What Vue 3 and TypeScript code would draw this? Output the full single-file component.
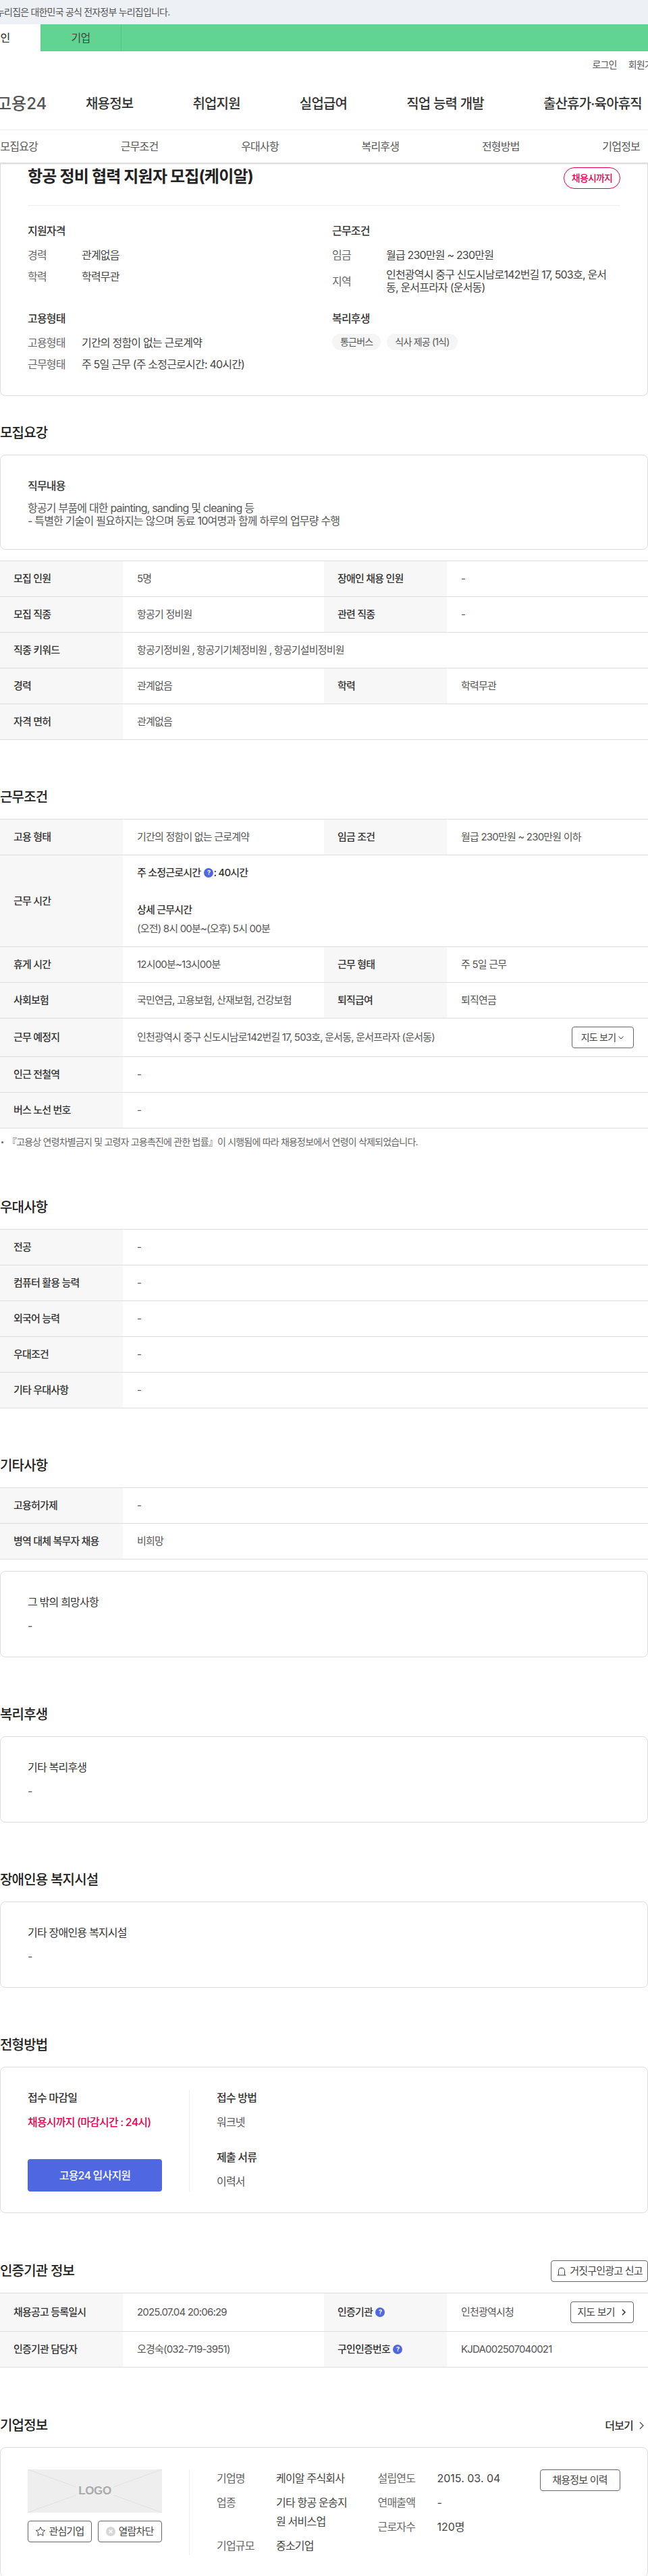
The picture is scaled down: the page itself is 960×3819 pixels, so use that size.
<script setup lang="ts">
type Row = { label: string; value: string; label2?: string; value2?: string }

const recruitRows: Row[] = [
  { label: '모집 인원', value: '5명', label2: '장애인 채용 인원', value2: '-' },
  { label: '모집 직종', value: '항공기 정비원', label2: '관련 직종', value2: '-' },
  { label: '직종 키워드', value: '항공기정비원 , 항공기기체정비원 , 항공기설비정비원' },
  { label: '경력', value: '관계없음', label2: '학력', value2: '학력무관' },
  { label: '자격 면허', value: '관계없음' },
]
const workRowsA: Row[] = [
  { label: '휴게 시간', value: '12시00분~13시00분', label2: '근무 형태', value2: '주 5일 근무' },
  { label: '사회보험', value: '국민연금, 고용보험, 산재보험, 건강보험', label2: '퇴직급여', value2: '퇴직연금' },
]
const workRowsB: Row[] = [
  { label: '인근 전철역', value: '-' },
  { label: '버스 노선 번호', value: '-' },
]
const preferRows: Row[] = [
  { label: '전공', value: '-' },
  { label: '컴퓨터 활용 능력', value: '-' },
  { label: '외국어 능력', value: '-' },
  { label: '우대조건', value: '-' },
  { label: '기타 우대사항', value: '-' },
]
const otherRows: Row[] = [
  { label: '고용허가제', value: '-' },
  { label: '병역 대체 복무자 채용', value: '비희망' },
]
const mainNav = ['채용정보', '취업지원', '실업급여', '직업 능력 개발', '출산휴가·육아휴직']
const subNav = ['모집요강', '근무조건', '우대사항', '복리후생', '전형방법', '기업정보']
</script>

<template>
  <div class="page">
    <div class="notice"><span>누리집은 대한민국 공식 전자정부 누리집입니다.</span></div>
    <div class="userbar">
      <div class="ut ut-on">개인</div>
      <div class="ut">기업</div>
    </div>

    <header class="head">
      <div class="util"><span>로그인</span><span>회원가입</span></div>
      <nav class="gnb">
        <span class="logo">고용24</span>
        <span v-for="n in mainNav" :key="n">{{ n }}</span>
      </nav>
    </header>

    <div class="subnav">
      <span v-for="n in subNav" :key="n">{{ n }}</span>
    </div>

    <section class="summary">
      <div class="sum-title">
        <h1>항공 정비 협력 지원자 모집(케이알)</h1>
        <span class="pill">채용시까지</span>
      </div>
      <div class="sum-grid">
        <div>
          <h3>지원자격</h3>
          <div class="sum-row"><span class="k">경력</span><span>관계없음</span></div>
          <div class="sum-row"><span class="k">학력</span><span>학력무관</span></div>
        </div>
        <div>
          <h3>근무조건</h3>
          <div class="sum-row"><span class="k">임금</span><span>월급 230만원 ~ 230만원</span></div>
          <div class="sum-row two"><span class="k">지역</span><span class="addr">인천광역시 중구 신도시남로142번길 17, 503호, 운서동, 운서프라자 (운서동)</span></div>
        </div>
        <div>
          <h3>고용형태</h3>
          <div class="sum-row"><span class="k">고용형태</span><span>기간의 정함이 없는 근로계약</span></div>
          <div class="sum-row"><span class="k">근무형태</span><span>주 5일 근무 (주 소정근로시간: 40시간)</span></div>
        </div>
        <div>
          <h3>복리후생</h3>
          <div class="chips"><span>통근버스</span><span>식사 제공 (1식)</span></div>
        </div>
      </div>
    </section>

    <section class="sec sec-first">
      <h2>모집요강</h2>
      <div class="box">
        <h4 class="strong">직무내용</h4>
        <p class="desc">항공기 부품에 대한 painting, sanding 및 cleaning 등<br />- 특별한 기술이 필요하지는 않으며 동료 10여명과 함께 하루의 업무량 수행</p>
      </div>
      <div class="tbl tbl-gap">
        <div v-for="r in recruitRows" :key="r.label" class="tr">
          <div class="th">{{ r.label }}</div>
          <div class="td" :class="{ wide: !r.label2 }">{{ r.value }}</div>
          <template v-if="r.label2">
            <div class="th">{{ r.label2 }}</div>
            <div class="td wide">{{ r.value2 }}</div>
          </template>
        </div>
      </div>
    </section>

    <section class="sec">
      <h2>근무조건</h2>
      <div class="tbl">
        <div class="tr">
          <div class="th">고용 형태</div>
          <div class="td">기간의 정함이 없는 근로계약</div>
          <div class="th">임금 조건</div>
          <div class="td wide">월급 230만원 ~ 230만원 이하</div>
        </div>
        <div class="tr">
          <div class="th">근무 시간</div>
          <div class="td wide hours">
            <div class="hl">주 소정근로시간
              <svg class="help" viewBox="0 0 14 14" aria-hidden="true"><circle cx="7" cy="7" r="7" fill="#4f67e0" /><text x="7" y="10.2" text-anchor="middle" font-size="9" font-weight="700" fill="#fff">?</text></svg><span>: 40시간</span>
            </div>
            <div class="hl hl-2">상세 근무시간</div>
            <div class="hv">(오전) 8시 00분~(오후) 5시 00분</div>
          </div>
        </div>
        <div v-for="r in workRowsA" :key="r.label" class="tr">
          <div class="th">{{ r.label }}</div>
          <div class="td">{{ r.value }}</div>
          <div class="th">{{ r.label2 }}</div>
          <div class="td wide">{{ r.value2 }}</div>
        </div>
        <div class="tr">
          <div class="th">근무 예정지</div>
          <div class="td wide between pad12">
            <span>인천광역시 중구 신도시남로142번길 17, 503호, 운서동, 운서프라자 (운서동)</span>
            <button class="btn map">지도 보기
              <svg width="10" height="10" viewBox="0 0 10 10" aria-hidden="true"><path d="M1.5 3.5 5 7l3.5-3.5" fill="none" stroke="#444" stroke-width="1" /></svg>
            </button>
          </div>
        </div>
        <div v-for="r in workRowsB" :key="r.label" class="tr">
          <div class="th">{{ r.label }}</div>
          <div class="td wide">{{ r.value }}</div>
        </div>
      </div>
      <p class="foot"><i></i>『고용상 연령차별금지 및 고령자 고용촉진에 관한 법률』이 시행됨에 따라 채용정보에서 연령이 삭제되었습니다.</p>
    </section>

    <section class="sec sec-after-foot">
      <h2>우대사항</h2>
      <div class="tbl">
        <div v-for="r in preferRows" :key="r.label" class="tr">
          <div class="th">{{ r.label }}</div>
          <div class="td wide">{{ r.value }}</div>
        </div>
      </div>
    </section>

    <section class="sec">
      <h2>기타사항</h2>
      <div class="tbl">
        <div v-for="r in otherRows" :key="r.label" class="tr">
          <div class="th">{{ r.label }}</div>
          <div class="td wide">{{ r.value }}</div>
        </div>
      </div>
      <div class="box box-simple box-gap">
        <h4>그 밖의 희망사항</h4>
        <p>-</p>
      </div>
    </section>

    <section class="sec">
      <h2>복리후생</h2>
      <div class="box box-simple">
        <h4>기타 복리후생</h4>
        <p>-</p>
      </div>
    </section>

    <section class="sec">
      <h2>장애인용 복지시설</h2>
      <div class="box box-simple">
        <h4>기타 장애인용 복지시설</h4>
        <p>-</p>
      </div>
    </section>

    <section class="sec">
      <h2>전형방법</h2>
      <div class="box apply">
        <div class="apply-left">
          <h4 class="strong">접수 마감일</h4>
          <p class="red">채용시까지 (마감시간 : 24시)</p>
          <button class="cta">고용24 입사지원</button>
        </div>
        <div class="apply-right">
          <h4 class="strong">접수 방법</h4>
          <p>워크넷</p>
          <h4 class="strong second">제출 서류</h4>
          <p>이력서</p>
        </div>
      </div>
    </section>

    <section class="sec">
      <div class="h-row">
        <h2>인증기관 정보</h2>
        <button class="btn report">
          <svg width="16" height="16" viewBox="0 0 16 16" aria-hidden="true"><path d="M3.5 14V7.5a4.5 4.5 0 0 1 9 0V14M1.5 14h13" fill="none" stroke="#444" stroke-width="1" /><path d="M8 3v1.6" stroke="#444" stroke-width="1" /></svg>
          거짓구인광고 신고
        </button>
      </div>
      <div class="tbl">
        <div class="tr">
          <div class="th">채용공고 등록일시</div>
          <div class="td">2025.07.04 20:06:29</div>
          <div class="th">인증기관
            <svg class="help" viewBox="0 0 14 14" aria-hidden="true"><circle cx="7" cy="7" r="7" fill="#4f67e0" /><text x="7" y="10.2" text-anchor="middle" font-size="9" font-weight="700" fill="#fff">?</text></svg>
          </div>
          <div class="td wide between pad12b">
            <span>인천광역시청</span>
            <button class="btn map map2">지도 보기
              <svg width="10" height="10" viewBox="0 0 10 10" aria-hidden="true"><path d="M3 1l4 4-4 4" fill="none" stroke="#222" stroke-width="1.4" /></svg>
            </button>
          </div>
        </div>
        <div class="tr">
          <div class="th">인증기관 담당자</div>
          <div class="td">오경숙(032-719-3951)</div>
          <div class="th">구인인증번호
            <svg class="help" viewBox="0 0 14 14" aria-hidden="true"><circle cx="7" cy="7" r="7" fill="#4f67e0" /><text x="7" y="10.2" text-anchor="middle" font-size="9" font-weight="700" fill="#fff">?</text></svg>
          </div>
          <div class="td wide">KJDA002507040021</div>
        </div>
      </div>
    </section>

    <section class="sec">
      <div class="h-row">
        <h2>기업정보</h2>
        <span class="more">더보기
          <svg width="10" height="14" viewBox="0 0 10 14" aria-hidden="true"><path d="M2 2l5 5-5 5" fill="none" stroke="#444" stroke-width="1.2" /></svg>
        </span>
      </div>
      <div class="box company">
        <div class="co-left">
          <div class="logo-ph">
            <svg class="ph-lines" viewBox="0 0 199 64" preserveAspectRatio="none" aria-hidden="true">
              <path d="M0 0l72 26M199 0l-72 26M0 64l72-26M199 64l-72-26" stroke="#e0e0e0" stroke-width="1" fill="none" />
            </svg>
            <span>LOGO</span>
          </div>
          <div class="co-btns">
            <button class="btn co">
              <svg width="16" height="16" viewBox="0 0 16 16" aria-hidden="true"><path d="M8 1.5l2 4.3 4.6.6-3.4 3.2.9 4.7L8 11.9l-4.1 2.4.9-4.7L1.4 6.4 6 5.8z" fill="none" stroke="#444" stroke-width="1" /></svg>
              관심기업
            </button>
            <button class="btn co">
              <svg width="14" height="14" viewBox="0 0 14 14" aria-hidden="true"><circle cx="7" cy="7" r="7" fill="#d6d6d6" /><path d="M4.5 4.5l5 5M9.5 4.5l-5 5" stroke="#fff" stroke-width="1.4" /></svg>
              열람차단
            </button>
          </div>
        </div>
        <div class="co-info">
          <div class="co-col col-a">
            <div class="co-row"><span class="k">기업명</span><span>케이알 주식회사</span></div>
            <div class="co-row tall"><span class="k">업종</span><span class="brk">기타 항공 운송지원 서비스업</span></div>
            <div class="co-row"><span class="k">기업규모</span><span>중소기업</span></div>
          </div>
          <div class="co-col col-b">
            <div class="co-row"><span class="k">설립연도</span><span class="num">2015. 03. 04</span></div>
            <div class="co-row"><span class="k">연매출액</span><span class="num">-</span></div>
            <div class="co-row"><span class="k">근로자수</span><span class="num">120명</span></div>
          </div>
          <button class="btn history">채용정보 이력</button>
        </div>
      </div>
    </section>
  </div>
</template>

<style>
html, body { background: #fff; }
</style>

<style scoped>
.page {
  width: 960px;
  height: 3819px;
  overflow: hidden;
  background: #fff;
  color: #444;
  font-family: Inter, "Noto Sans CJK KR", sans-serif;
  font-size: 16px;
  line-height: 24px;
  letter-spacing: -0.05em;
}
h1, h2, h3, h4, p { margin: 0; font: inherit; }
button { font: inherit; letter-spacing: inherit; background: #fff; cursor: pointer; padding: 0; }

.notice { height: 36px; background: #edf0f5; display: flex; align-items: center; font-size: 14px; color: #555; }
.notice span { white-space: nowrap; margin-left: -6px; }

.userbar { height: 40px; background: #62d491; display: flex; margin-left: -59px; }
.ut { width: 119px; display: flex; align-items: center; justify-content: center; color: #444; border-right: 1px solid #58c685; }
.ut-on { background: #fff; color: #222; border-right: 0; }

.head { height: 117px; box-sizing: border-box; border-bottom: 1px solid #eee; padding-top: 10px; }
.util { display: flex; justify-content: flex-end; gap: 17px; margin-right: -19px; font-size: 14px; line-height: 20px; color: #555; }
.gnb { display: flex; gap: 88px; margin-top: 33px; font-size: 20px; line-height: 30px; font-weight: 500; color: #333; white-space: nowrap; }
.logo { font-size: 24px; margin-left: -5px; margin-right: -35px; color: #555; letter-spacing: 0; width: 79px; }

.subnav {
  display: grid;
  grid-template-columns: repeat(6, 178.4px);
  justify-items: center;
  width: 1070px;
  margin-left: -61px;
  height: 48px;
  align-items: center;
  color: #555;
  border-bottom: 2px solid #ddd;
  box-shadow: 0 1px 2px rgba(0, 0, 0, .06);
  position: relative;
}

.summary { border: 1px solid #ddd; border-top: 0; border-radius: 0 0 8px 8px; padding: 5px 40px 34px; }
.sum-title { display: flex; justify-content: space-between; align-items: flex-start; padding-bottom: 24px; border-bottom: 1px solid #eee; }
.sum-title h1 { font-size: 24px; line-height: 32px; font-weight: 700; color: #222; margin-top: -2px; }
.pill { width: 84px; height: 32px; box-sizing: border-box; border: 1px solid #e6004f; border-radius: 16px; color: #e6004f; font-size: 14px; font-weight: 500; display: flex; align-items: center; justify-content: center; }
.sum-grid { display: grid; grid-template-columns: 451px 427px; row-gap: 24px; padding-top: 25px; }
.sum-grid h3 { font-weight: 500; color: #333; margin-bottom: 12px; }
.sum-row { display: flex; color: #444; align-items: center; }
.sum-row + .sum-row { margin-top: 8px; }
.sum-row .k { width: 80px; flex: none; color: #666; }
.two { line-height: 19px; }
.addr { width: 338px; word-break: break-all; }
.chips { display: flex; gap: 9px; margin-top: -1px; }
.chips span { height: 24px; padding: 0 12px; background: #f5f5f5; border-radius: 12px; font-size: 14px; line-height: 24px; color: #555; }

.sec { margin-top: 70px; }
.sec-first { margin-top: 40px; }
.sec-after-foot { margin-top: 72px; }
h2 { font-size: 20px; line-height: 30px; font-weight: 500; color: #222; margin-bottom: 16px; }
.sec > h2 { margin-bottom: 17px; }

.box { border: 1px solid #ddd; border-radius: 8px; padding: 33px 40px 32px; }
.box h4 { color: #333; }
.box h4.strong { font-weight: 500; }
.desc { margin-top: 12px; line-height: 19px; color: #555; }
.box-simple { padding-bottom: 34px; }
.box-simple p { margin-top: 11px; color: #555; }
.box-gap { margin-top: 17px; }

.tbl { border-top: 1px solid #ddd; font-size: 15px; }
.tbl-gap { margin-top: 16px; }
.tr { display: flex; border-bottom: 1px solid #ddd; min-height: 52px; }
.th { width: 182px; flex: none; box-sizing: border-box; padding-left: 20px; background: #f7f7f7; font-weight: 500; color: #333; display: flex; align-items: center; gap: 4px; }
.td { width: 298px; flex: none; box-sizing: border-box; padding-left: 21px; display: flex; align-items: center; color: #555; }
.td.wide { flex: 1; width: auto; min-width: 0; }
.between { justify-content: space-between; padding-right: 21px; }
.pad12 { padding-top: 12px; padding-bottom: 12px; }
.pad12b { padding-top: 12px; padding-bottom: 12px; }

.hours { flex-direction: column; align-items: flex-start; padding-top: 14px; padding-bottom: 14px; }
.hl { font-weight: 500; color: #333; display: flex; align-items: center; white-space: pre; }
.hl-2 { margin-top: 31px; }
.hv { margin-top: 4px; }
.help { width: 14px; height: 14px; flex: none; }
.hl .help { margin-left: 2px; }

.btn { height: 32px; box-sizing: border-box; border: 1px solid #666; border-radius: 4px; display: inline-flex; align-items: center; justify-content: center; gap: 3px; color: #444; font-size: 14px; line-height: 20px; }
.map { width: 92px; flex: none; }
.map2 { width: 94px; gap: 8px; font-size: 15px; }

.foot { margin-top: 10px; font-size: 14px; line-height: 20px; color: #666; padding-left: 11px; position: relative; white-space: nowrap; }
.foot i { position: absolute; left: 2px; top: 9px; width: 3px; height: 3px; border-radius: 50%; background: #666; }

.apply { display: flex; padding-bottom: 31px; }
.apply-left { width: 199px; flex: none; padding-right: 40px; border-right: 1px solid #eee; display: flex; flex-direction: column; box-sizing: content-box; }
.apply-right { padding-left: 40px; }
.apply p { margin-top: 12px; color: #555; }
.apply .red { color: #e6004f; font-weight: 500; white-space: nowrap; }
.second { margin-top: 28px; }
.cta { height: 48px; margin-top: 43px; background: #4f67e0; border: 0; border-radius: 4px; color: #fff; font-size: 16px; font-weight: 500; }

.h-row { display: flex; justify-content: space-between; align-items: center; height: 32px; margin-bottom: 16px; }
.h-row h2 { margin: 0; }
.report { width: 144px; gap: 4px; font-size: 15px; }
.more { display: flex; align-items: center; gap: 8px; font-weight: 500; color: #333; margin-right: 4px; }

.company { display: flex; padding: 32px 40px 32px; height: 193px; box-sizing: border-box; }
.co-left { width: 199px; flex: none; padding-right: 40px; border-right: 1px solid #eee; box-sizing: content-box; }
.logo-ph { height: 64px; background: #eee; display: flex; align-items: center; justify-content: center; position: relative; font-family: "Liberation Sans", sans-serif; font-weight: 700; color: #aaa; font-size: 17px; letter-spacing: -0.02em; }
.ph-lines { position: absolute; inset: 0; width: 100%; height: 100%; }
.co-btns { display: flex; gap: 9px; margin-top: 12px; }
.co { width: 95px; gap: 4px; font-size: 15px; }
.co-info { display: flex; padding-left: 40px; flex: 1; align-items: flex-start; }
.co-col { flex: none; }
.col-a { width: 238.5px; padding-top: 1px; }
.col-b { width: 240px; padding-top: 1px; }
.co-row { display: flex; }
.co-row .k { flex: none; width: 88px; color: #666; }
.col-a .co-row + .co-row { margin-top: 10px; }
.col-b .co-row + .co-row { margin-top: 12px; }
.num { letter-spacing: 0; }
.tall { line-height: 28px; }
.brk { width: 110px; word-break: break-all; }
.history { width: 119px; height: 32px; flex: none; font-size: 15px; }
</style>
